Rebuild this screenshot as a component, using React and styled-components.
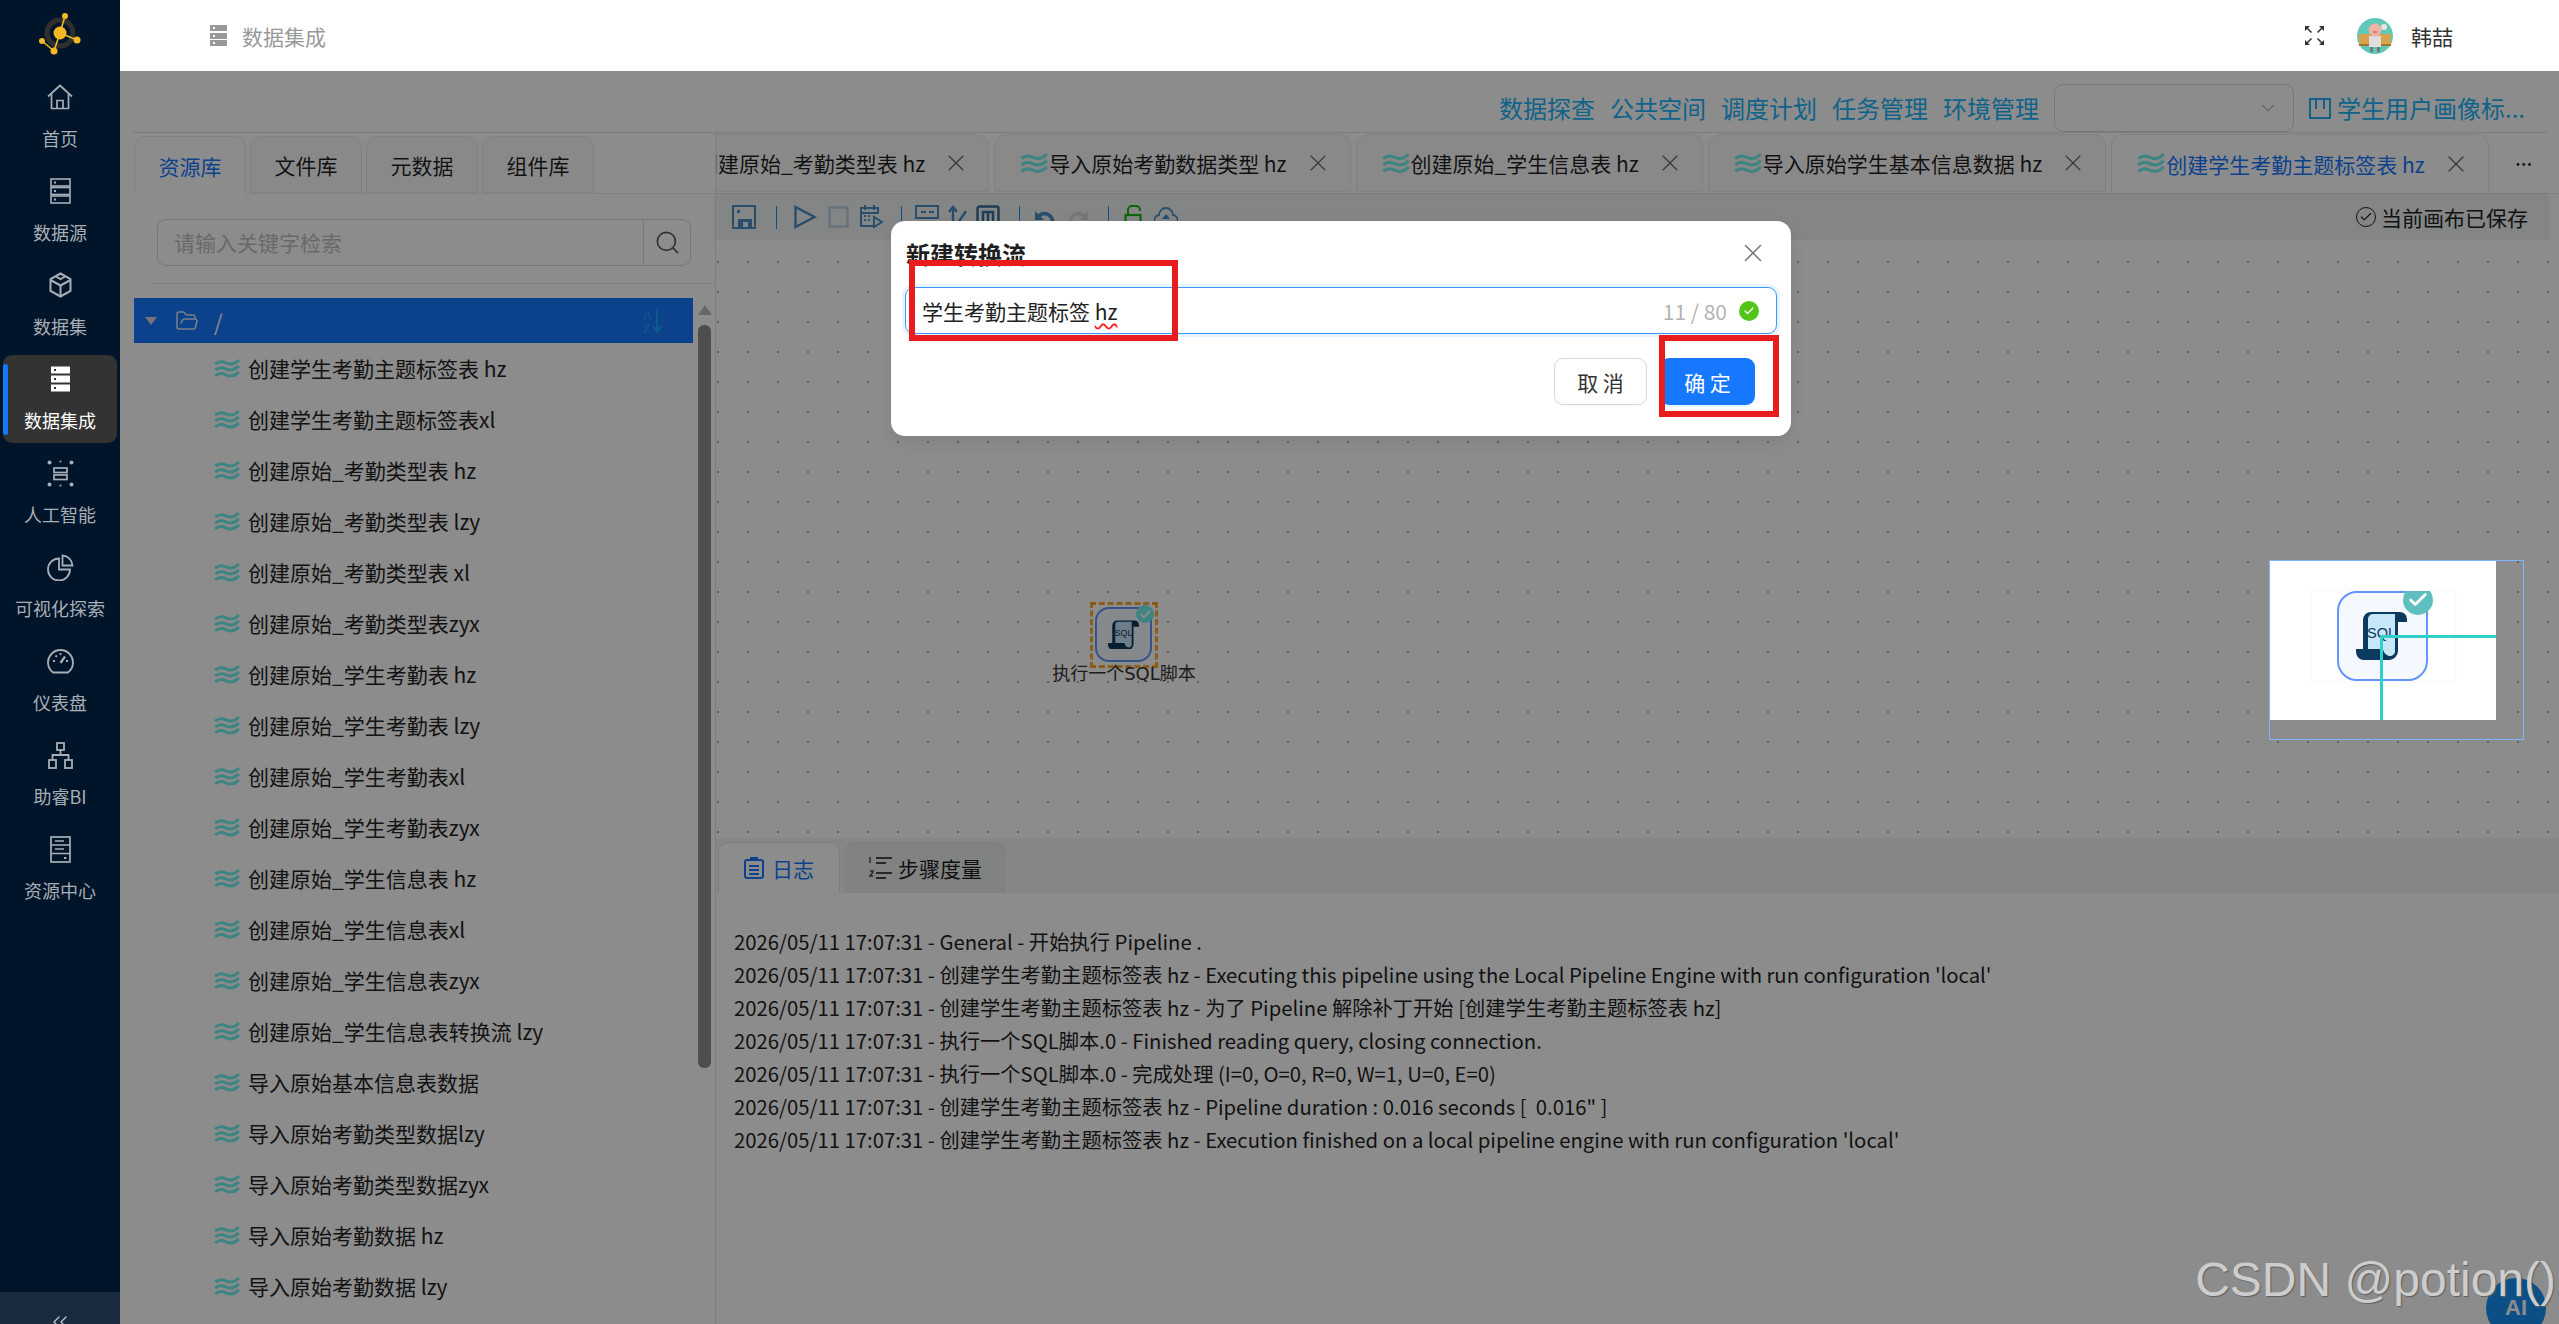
import React from 'react'
import styled, { createGlobalStyle } from 'styled-components'
import { Search, X, ChevronDown, ChevronsLeft, Check, FolderOpen } from 'lucide-react'

const treeItems = [
  '创建学生考勤主题标签表 hz',
  '创建学生考勤主题标签表xl',
  '创建原始_考勤类型表 hz',
  '创建原始_考勤类型表 lzy',
  '创建原始_考勤类型表 xl',
  '创建原始_考勤类型表zyx',
  '创建原始_学生考勤表 hz',
  '创建原始_学生考勤表 lzy',
  '创建原始_学生考勤表xl',
  '创建原始_学生考勤表zyx',
  '创建原始_学生信息表 hz',
  '创建原始_学生信息表xl',
  '创建原始_学生信息表zyx',
  '创建原始_学生信息表转换流 lzy',
  '导入原始基本信息表数据',
  '导入原始考勤类型数据lzy',
  '导入原始考勤类型数据zyx',
  '导入原始考勤数据 hz',
  '导入原始考勤数据 lzy',
]

const stamp = '2026/05/11 17:07:31 - '
const job = '创建学生考勤主题标签表 hz - '
const logLines = [
  stamp + 'General - 开始执行 Pipeline .',
  stamp + job + "Executing this pipeline using the Local Pipeline Engine with run configuration 'local'",
  stamp + job + '为了 Pipeline 解除补丁开始 [创建学生考勤主题标签表 hz]',
  stamp + '执行一个SQL脚本.0 - Finished reading query, closing connection.',
  stamp + '执行一个SQL脚本.0 - 完成处理 (I=0, O=0, R=0, W=1, U=0, E=0)',
  stamp + job + 'Pipeline duration : 0.016 seconds [  0.016" ]',
  stamp + job + "Execution finished on a local pipeline engine with run configuration 'local'",
]

const editorTabs = [
  { label: '创建原始_考勤类型表 hz' },
  { label: '导入原始考勤数据类型 hz' },
  { label: '创建原始_学生信息表 hz' },
  { label: '导入原始学生基本信息数据 hz' },
  { label: '创建学生考勤主题标签表 hz', active: true },
]

function LogoMark() {
  return (
    <svg width="48" height="50" viewBox="0 0 48 50">
      <circle cx="21" cy="22" r="13" fill="none" stroke="#2f2f2c" strokeWidth="5" />
      <g stroke="#f2b826" strokeWidth="1.6">
        <line x1="21" y1="22" x2="26" y2="5" />
        <line x1="21" y1="22" x2="38" y2="29" />
        <line x1="21" y1="22" x2="15" y2="40" />
        <line x1="15" y1="40" x2="3" y2="30" />
      </g>
      <g fill="#f2b826">
        <circle cx="21" cy="22" r="6.5" />
        <circle cx="26" cy="5" r="3" />
        <circle cx="38" cy="29" r="3.5" />
        <circle cx="15" cy="40" r="3.5" />
        <circle cx="3" cy="30" r="3" />
      </g>
    </svg>
  )
}

function HomeIcon() {
  return (
    <svg width="28" height="26" viewBox="0 0 28 26" fill="none" stroke="currentColor" strokeWidth="1.7">
      <path d="M2 12.5 14 1.5l12 11" />
      <path d="M5.5 10v14.5h17V10" />
      <path d="M11 24.5v-8h6v8" />
    </svg>
  )
}

function ServerIcon({ filled }) {
  const rows = filled ? [0.5, 9.5, 18.5] : [1, 9.5, 18]
  return (
    <svg width="21" height="26" viewBox="0 0 21 26" fill="none" stroke="currentColor" strokeWidth="1.6">
      {rows.map((y) => (
        <g key={y}>
          <rect x="1" y={y} width="19" height="7" fill={filled ? '#fff' : 'none'} stroke={filled ? 'none' : 'currentColor'} />
          <rect x="4" y={y + 2.5} width="2" height="2" fill={filled ? '#333' : 'currentColor'} stroke="none" />
        </g>
      ))}
    </svg>
  )
}

function CubeIcon() {
  return (
    <svg width="23" height="26" viewBox="0 0 23 26" fill="none" stroke="currentColor" strokeWidth="2">
      <path d="M11.5 1.5 21.5 7v12l-10 5.5L1.5 19V7z" />
      <path d="M1.5 8 11.5 13.5 21.5 8M11.5 13.5V24" />
      <path d="M7 4.5 11.5 7 16 4.5" />
    </svg>
  )
}

function AiIcon() {
  return (
    <svg width="27" height="27" viewBox="0 0 27 27" fill="none" stroke="currentColor" strokeWidth="1.7">
      <g fill="currentColor" stroke="none">
        <circle cx="2.5" cy="2.5" r="2" />
        <circle cx="24.5" cy="2.5" r="2" />
        <circle cx="2.5" cy="24.5" r="2" />
        <circle cx="24.5" cy="24.5" r="2" />
        <circle cx="13.5" cy="1.5" r="1" />
        <circle cx="13.5" cy="25.5" r="1" />
      </g>
      <rect x="7" y="8" width="13" height="4.5" />
      <rect x="7" y="15" width="13" height="4.5" />
    </svg>
  )
}

function PieIcon() {
  return (
    <svg width="27" height="27" viewBox="0 0 27 27" fill="none" stroke="currentColor" strokeWidth="1.8">
      <path d="M12 4.5a11 11 0 1 0 11 11H12z" />
      <path d="M15.5 1.5a10.5 10.5 0 0 1 10 10h-10z" />
    </svg>
  )
}

function GaugeIcon() {
  return (
    <svg width="27" height="26" viewBox="0 0 27 26" fill="none" stroke="currentColor" strokeWidth="1.8">
      <path d="M6 24.5a12.5 12.5 0 1 1 15 0z" />
      <path d="M13.5 15 18 8.5" strokeWidth="2.2" />
      <path d="M6 13h2M8.5 7.5l1.4 1.4M13.5 5v2M19 13h2" />
    </svg>
  )
}

function TreeIcon() {
  return (
    <svg width="25" height="27" viewBox="0 0 25 27" fill="none" stroke="currentColor" strokeWidth="1.8">
      <rect x="9" y="1" width="7" height="7" />
      <rect x="1" y="18" width="7" height="8" />
      <rect x="17" y="18" width="7" height="8" />
      <path d="M12.5 8v5M4.5 18v-5h16v5" />
    </svg>
  )
}

function CabinetIcon() {
  return (
    <svg width="21" height="27" viewBox="0 0 21 27" fill="none" stroke="currentColor" strokeWidth="1.7">
      <rect x="1" y="1" width="19" height="25" />
      <path d="M1 9h19M1 17.5h19M5 5h9M5 13h9" />
      <rect x="14" y="21" width="2.4" height="2" fill="currentColor" stroke="none" />
    </svg>
  )
}

function FlowIcon({ size = 26 }) {
  return (
    <svg width={size} height={size * 0.8} viewBox="0 0 26 21" fill="none" stroke="#6ff0ee" strokeWidth="3">
      <path d="M1 6c4-3 7-3 11-1s8 2 13-3" />
      <path d="M1 12c4-3 7-3 11-1s8 2 13-3" />
      <path d="M1 18c4-3 7-3 11-1s8 2 13-3" />
    </svg>
  )
}

function ScrollIcon({ width }) {
  return (
    <svg width={width} viewBox="0 0 51 49">
      <path d="M7 38V9a8 8 0 0 1 8-8h29a7 7 0 0 1 7 7v3h-9v29a9 9 0 0 1-9 9H8a8 8 0 0 1-8-8v-3z" fill="#0b3a5e" />
      <path d="M12 38V8a5 5 0 0 1 5-5h22v38a5 5 0 0 1-8 3 8 8 0 0 1-4-6z" fill="#c7e6fa" />
      <text x="25.5" y="27" textAnchor="middle" fontFamily="Liberation Sans, sans-serif" fontSize="14.5" fill="#0b3a5e">SQL</text>
    </svg>
  )
}

function ToolSave() {
  return (
    <svg width="24" height="24" viewBox="0 0 24 24" fill="#4a8ec4">
      <path fillRule="evenodd" d="M0 0h24v24H0zM2 2v20h4v-8h14v8h2V2zM5 5h3v3H5zM11 17h5v5h-5z" />
    </svg>
  )
}

function ToolPlay() {
  return (
    <svg width="23" height="24" viewBox="0 0 23 24" fill="none" stroke="#4a8ec4" strokeWidth="2.4">
      <path d="M1.5 2v20l19-10z" />
    </svg>
  )
}

function ToolStop() {
  return (
    <svg width="21" height="24" viewBox="0 0 21 24" fill="none" stroke="#b8cfe0" strokeWidth="2.4">
      <rect x="1.5" y="2.5" width="18" height="19" />
    </svg>
  )
}

function ToolSchedule() {
  return (
    <svg width="24" height="24" viewBox="0 0 24 24" fill="none" stroke="#4a8ec4" strokeWidth="2">
      <path d="M13 21H1V3h17v6M1 8h17M5 0v5M14 0v5" />
      <path d="M4 11h2M8 11h2M4 15h2M8 15h2" />
      <path d="M14 12v10l8-5z" />
    </svg>
  )
}

function ToolDataBar() {
  return (
    <svg width="24" height="24" viewBox="0 0 24 24" fill="none" stroke="#4a8ec4" strokeWidth="2">
      <rect x="1" y="1" width="22" height="12" />
      <path d="M6 7h5M14 7h5M1 18h22M1 23h22" />
    </svg>
  )
}

function ToolArrows() {
  return (
    <svg width="19" height="24" viewBox="0 0 19 24" fill="none" stroke="#4a8ec4" strokeWidth="2.4">
      <path d="M5 24V3M1 7l4-5 4 5M10 18 18 6" />
    </svg>
  )
}

function ToolFrame() {
  return (
    <svg width="24" height="24" viewBox="0 0 24 24" fill="none" stroke="#37709c" strokeWidth="2.4">
      <rect x="1.5" y="1.5" width="21" height="21" rx="2" />
      <path d="M7 17V7h10v10M12 7v10" />
    </svg>
  )
}

function ToolUndo({ flip, color }) {
  return (
    <svg width="22" height="24" viewBox="0 0 22 24" fill="none" stroke={color} strokeWidth="3.5" style={flip ? { transform: 'scaleX(-1)' } : undefined}>
      <path d="M19 18C18 8 9 6 4 12" />
      <path d="M1 6v9h9" fill={color} stroke="none" />
    </svg>
  )
}

function ToolLock() {
  return (
    <svg width="18" height="24" viewBox="0 0 18 24" fill="none" stroke="#17b817" strokeWidth="2.2">
      <path d="M4 10V5a4 4 0 0 1 4-4h4a4 4 0 0 1 4 4v1" />
      <rect x="1.5" y="10" width="15" height="12" />
    </svg>
  )
}

function ToolCloud() {
  return (
    <svg width="24" height="24" viewBox="0 0 24 24" fill="none" stroke="#4a8ec4" strokeWidth="1.8">
      <path d="M6 20a5 5 0 0 1-1-10 7 7 0 0 1 14 0 5 5 0 0 1-1 10z" />
      <path d="M12 9l4 5H8z" fill="#4a8ec4" stroke="none" />
    </svg>
  )
}

function ExpandIcon() {
  return (
    <svg width="21" height="21" viewBox="0 0 21 21" fill="#333" stroke="#333" strokeWidth="1.5">
      <path d="M7.5 7.5 2.5 2.5M13.5 7.5l5-5M7.5 13.5l-5 5M13.5 13.5l5 5" />
      <path d="M1 1h5L1 6zM20 1h-5l5 5zM1 20h5l-5-5zM20 20h-5l5-5z" stroke="none" />
    </svg>
  )
}

function AvatarIcon() {
  return (
    <svg width="36" height="36" viewBox="0 0 36 36">
      <circle cx="18" cy="18" r="18" fill="#5fc8b8" />
      <rect x="2" y="16" width="32" height="12" fill="#d9a24c" />
      <rect x="2" y="26" width="32" height="2" fill="#a5742c" />
      <circle cx="27" cy="9" r="3" fill="#e8e8e0" />
      <rect x="12" y="18" width="12" height="11" fill="#dedede" />
      <path d="M13 29h3v5h-3zM20 29h3v5h-3z" fill="#777" />
      <circle cx="18" cy="12" r="6.5" fill="#efb4a6" />
      <ellipse cx="18" cy="14" rx="2.5" ry="1.5" fill="#d98a80" />
    </svg>
  )
}

function LogIcon() {
  return (
    <svg width="20" height="22" viewBox="0 0 20 22" fill="none" stroke="#1677ff" strokeWidth="2">
      <rect x="1" y="3" width="18" height="18" rx="2" />
      <rect x="6" y="0" width="8" height="4" fill="#1677ff" stroke="none" />
      <path d="M5 9h10M5 13h10M5 17h10" />
    </svg>
  )
}

function MetricIcon() {
  return (
    <svg width="25" height="24" viewBox="0 0 25 24" fill="none" stroke="#4a4a4a" strokeWidth="2.2">
      <path d="M2 1v6M2 15h3v1l-3 4h3" strokeWidth="1.5" />
      <path d="M8 2h16M8 7h10M8 17h16M8 22h10" />
    </svg>
  )
}

function SortIcon() {
  return (
    <svg width="20" height="24" viewBox="0 0 20 24" fill="none" stroke="#18a4ff" strokeWidth="2">
      <text x="0" y="11" fontFamily="Liberation Sans, sans-serif" fontSize="13" fill="#18a4ff" stroke="none">A</text>
      <text x="0" y="24" fontFamily="Liberation Sans, sans-serif" fontSize="13" fill="#18a4ff" stroke="none">Z</text>
      <path d="M14 0v22M10 17l4 6 5-6" />
    </svg>
  )
}

function App() {
  return (
    <Page>
      <GlobalStyle />
      <Sidebar>
        <LogoBox>
          <LogoMark />
        </LogoBox>
        <NavList>
          <NavItem>
            <NavIcon><HomeIcon /></NavIcon>
            <NavLabel>首页</NavLabel>
          </NavItem>
          <NavItem>
            <NavIcon><ServerIcon /></NavIcon>
            <NavLabel>数据源</NavLabel>
          </NavItem>
          <NavItem>
            <NavIcon><CubeIcon /></NavIcon>
            <NavLabel>数据集</NavLabel>
          </NavItem>
          <NavItem $active>
            <NavIcon><ServerIcon filled /></NavIcon>
            <NavLabel>数据集成</NavLabel>
          </NavItem>
          <NavItem>
            <NavIcon><AiIcon /></NavIcon>
            <NavLabel>人工智能</NavLabel>
          </NavItem>
          <NavItem>
            <NavIcon><PieIcon /></NavIcon>
            <NavLabel>可视化探索</NavLabel>
          </NavItem>
          <NavItem>
            <NavIcon><GaugeIcon /></NavIcon>
            <NavLabel>仪表盘</NavLabel>
          </NavItem>
          <NavItem>
            <NavIcon><TreeIcon /></NavIcon>
            <NavLabel>助睿BI</NavLabel>
          </NavItem>
          <NavItem>
            <NavIcon><CabinetIcon /></NavIcon>
            <NavLabel>资源中心</NavLabel>
          </NavItem>
        </NavList>
        <CollapseBar>
          <ChevronsLeft size={24} strokeWidth={1.2} />
        </CollapseBar>
      </Sidebar>

      <Content>
        <Header>
          <HeaderTitle>
            <HeaderGlyph>
              <HeaderRow /><HeaderRow /><HeaderRow />
            </HeaderGlyph>
            数据集成
          </HeaderTitle>
          <HeaderUser>
            <ExpandIcon />
            <AvatarBox><AvatarIcon /></AvatarBox>
            <UserName>韩喆</UserName>
          </HeaderUser>
        </Header>

        <Main>
          <ActionBar>
            <ActionLink>数据探查</ActionLink>
            <ActionLink>公共空间</ActionLink>
            <ActionLink>调度计划</ActionLink>
            <ActionLink>任务管理</ActionLink>
            <ActionLink>环境管理</ActionLink>
            <SelectBox>
              <ChevronDown size={22} strokeWidth={1.4} color="#bfbfbf" />
            </SelectBox>
            <ProjectName>
              <svg width="22" height="21" viewBox="0 0 22 21" fill="none" stroke="#1bb4fa" strokeWidth="2">
                <rect x="1" y="1" width="20" height="19" />
                <path d="M7 1v10M15 1v10" />
              </svg>
              学生用户画像标...
            </ProjectName>
          </ActionBar>

          <Workspace>
            <LeftPanel>
              <SideTabs>
                <SideTab $active>资源库</SideTab>
                <SideTab>文件库</SideTab>
                <SideTab>元数据</SideTab>
                <SideTab>组件库</SideTab>
              </SideTabs>
              <SearchBox>
                <SearchInput>请输入关键字检索</SearchInput>
                <SearchButton><Search size={27} strokeWidth={1.5} color="#555" /></SearchButton>
              </SearchBox>
              <PanelDivider />
              <TreeArea>
                <Tree>
                  <RootRow>
                    <Caret />
                    <FolderOpen size={24} strokeWidth={1.5} color="#fff" style={{ opacity: 0.85 }} />
                    <RootName>/</RootName>
                    <SortBox><SortIcon /></SortBox>
                  </RootRow>
                  {treeItems.map((item) => (
                    <TreeRow key={item}>
                      <FlowIcon />
                      <TreeRowText>{item}</TreeRowText>
                    </TreeRow>
                  ))}
                </Tree>
                <ScrollTrack>
                  <ScrollArrow />
                  <ScrollThumb />
                </ScrollTrack>
              </TreeArea>
            </LeftPanel>

            <RightPanel>
              <EditorTabs>
                {editorTabs.map((tab, i) => (
                  <EditorTab key={tab.label} $active={tab.active} $first={i === 0}>
                    <FlowIcon size={28} />
                    <EditorTabText>{tab.label}</EditorTabText>
                    <X size={28} strokeWidth={1} color="#666" />
                  </EditorTab>
                ))}
                <MoreTabs>...</MoreTabs>
              </EditorTabs>

              <Toolbar>
                <ToolGroup $gap={11} $left={16} $right={20}><ToolSave /></ToolGroup>
                <ToolDivider />
                <ToolGroup $gap={11} $left={17} $right={17}>
                  <ToolPlay /><ToolStop /><ToolSchedule />
                </ToolGroup>
                <ToolDivider />
                <ToolGroup $gap={9} $left={13} $right={19}>
                  <ToolDataBar /><ToolArrows /><ToolFrame />
                </ToolGroup>
                <ToolDivider />
                <ToolGroup $gap={11} $left={14} $right={19}>
                  <ToolUndo color="#4a8ec4" /><ToolUndo flip color="#d9d9d9" />
                </ToolGroup>
                <ToolDivider />
                <ToolGroup $gap={12} $left={15} $right={0}>
                  <ToolLock /><ToolCloud />
                </ToolGroup>
                <SavedNote>
                  <SavedCircle><Check size={14} strokeWidth={2} /></SavedCircle>
                  当前画布已保存
                </SavedNote>
              </Toolbar>

              <Canvas>
                <StepNode>
                  <StepFrame>
                    <StepCard>
                      <ScrollIcon width={31} />
                      <StepBadge><Check size={13} strokeWidth={3.5} color="#fff" /></StepBadge>
                    </StepCard>
                  </StepFrame>
                  <StepLabel>执行一个SQL脚本</StepLabel>
                </StepNode>
              </Canvas>

              <LogPanel>
                <LogTabs>
                  <LogTab $active><LogIcon />日志</LogTab>
                  <LogTab><MetricIcon />步骤度量</LogTab>
                </LogTabs>
                <LogBody>
                  {logLines.map((line, i) => (
                    <LogLine key={i}>{line}</LogLine>
                  ))}
                </LogBody>
              </LogPanel>
            </RightPanel>
          </Workspace>
        </Main>
      </Content>

      <AiButton>AI</AiButton>
      <Mask />

      <Minimap>
        <MinimapPage>
          <MinimapCard>
            <MinimapStep>
              <ScrollIcon width={51} />
            </MinimapStep>
            <MinimapBadge><Check size={22} strokeWidth={3} color="#fff" /></MinimapBadge>
          </MinimapCard>
          <MinimapLineH />
          <MinimapLineV />
        </MinimapPage>
      </Minimap>

      <Modal>
        <ModalHead>
          <ModalTitle>新建转换流</ModalTitle>
          <X size={30} strokeWidth={1.2} color="#777" />
        </ModalHead>
        <NameField>
          <NameText>学生考勤主题标签 <Misspelt>hz</Misspelt></NameText>
          <NameCount>11 / 80</NameCount>
          <NameOk><Check size={12} strokeWidth={2.5} color="#fff" /></NameOk>
        </NameField>
        <ModalFoot>
          <GhostButton>取 消</GhostButton>
          <PrimaryButton>确 定</PrimaryButton>
        </ModalFoot>
      </Modal>

      <CalloutBox $left={909} $top={260} $width={269} $height={81} />
      <CalloutBox $left={1659} $top={335} $width={120} $height={82} />
      <Watermark>CSDN @potion()</Watermark>
    </Page>
  )
}

export default App

const GlobalStyle = createGlobalStyle`
html, body {
  margin: 0;
  padding: 0;
  background: #fff;
  overflow: hidden;
}
* {
  box-sizing: border-box;
}
`

const Page = styled.div`
position: relative;
display: flex;
width: 2559px;
height: 1324px;
overflow: hidden;
font-family: "Noto Sans CJK SC", "Noto Sans", sans-serif;
font-size: 21px;
color: rgba(0, 0, 0, 0.88);
`

const Sidebar = styled.aside`
width: 120px;
flex-shrink: 0;
display: flex;
flex-direction: column;
background: #00152a;
`

const LogoBox = styled.div`
height: 73px;
padding: 11px 0 0 39px;
`

const NavList = styled.nav`
display: flex;
flex-direction: column;
gap: 6px;
padding: 0 3px;
`

const NavItem = styled.div`
position: relative;
height: 88px;
padding-top: 10px;
display: flex;
flex-direction: column;
align-items: center;
border-radius: 9px;
color: ${(p) => (p.$active ? '#fff' : '#a8aeb5')};
background: ${(p) => (p.$active ? '#333' : 'transparent')};

&::before {
  content: ${(p) => (p.$active ? '""' : 'none')};
  position: absolute;
  left: 0;
  top: 9px;
  width: 5px;
  height: 71px;
  border-radius: 3px;
  background: #1677ff;
}
`

const NavIcon = styled.div`
height: 28px;
display: flex;
align-items: center;
justify-content: center;
`

const NavLabel = styled.div`
margin-top: 15px;
font-size: 18px;
line-height: 24px;
white-space: nowrap;
`

const CollapseBar = styled.div`
margin-top: auto;
height: 32px;
padding-top: 18px;
overflow: hidden;
display: flex;
justify-content: center;
align-items: flex-start;
background: #1a2b3f;
color: #c8ccd2;
`

const Content = styled.div`
flex: 1;
min-width: 0;
display: flex;
flex-direction: column;
`

const Header = styled.header`
height: 71px;
flex-shrink: 0;
display: flex;
align-items: center;
justify-content: space-between;
padding: 0 106px 0 90px;
background: #fff;
`

const HeaderTitle = styled.div`
display: flex;
align-items: center;
gap: 15px;
color: #999;
font-size: 21px;
`

const HeaderGlyph = styled.div`
width: 17px;
display: flex;
flex-direction: column;
gap: 1.5px;
`

const HeaderRow = styled.div`
position: relative;
height: 6px;
background: #999;

&::before {
  content: "";
  position: absolute;
  left: 3px;
  top: 2px;
  width: 2px;
  height: 2px;
  background: #fff;
}
`

const HeaderUser = styled.div`
display: flex;
align-items: center;
`

const AvatarBox = styled.div`
width: 36px;
height: 36px;
margin: 0 18px 0 32px;
`

const UserName = styled.div`
font-size: 21px;
color: #333;
`

const Main = styled.main`
flex: 1;
min-height: 0;
display: flex;
flex-direction: column;
background: #fff;
`

const ActionBar = styled.div`
height: 62px;
flex-shrink: 0;
margin: 0 11px 0 12px;
padding: 13px 23px 0 0;
display: flex;
align-items: center;
justify-content: flex-end;
gap: 15px;
border-bottom: 1px solid #e4e4e4;
`

const ActionLink = styled.div`
font-size: 24px;
line-height: 34px;
color: #1bb4fa;
`

const SelectBox = styled.div`
width: 240px;
height: 48px;
padding-right: 14px;
display: flex;
align-items: center;
justify-content: flex-end;
border: 1px solid #d9d9d9;
border-radius: 9px;
`

const ProjectName = styled.div`
display: flex;
align-items: center;
gap: 6px;
font-size: 24px;
line-height: 34px;
color: #1bb4fa;
`

const Workspace = styled.div`
flex: 1;
min-height: 0;
display: flex;
`

const LeftPanel = styled.section`
width: 596px;
flex-shrink: 0;
display: flex;
flex-direction: column;
padding-left: 14px;
border-right: 1px solid #e8e8e8;
`

const SideTabs = styled.div`
height: 61px;
flex-shrink: 0;
padding-top: 3px;
display: flex;
gap: 4px;
border-bottom: 1px solid #ececec;
`

const SideTab = styled.div`
width: 112px;
height: ${(p) => (p.$active ? '58px' : '57px')};
display: flex;
align-items: center;
justify-content: center;
font-size: 21px;
color: ${(p) => (p.$active ? '#1677ff' : 'rgba(0, 0, 0, 0.88)')};
border: 1px solid #ececec;
border-bottom: ${(p) => (p.$active ? 'none' : '1px solid #ececec')};
border-radius: 12px 12px 0 0;
background: ${(p) => (p.$active ? '#fff' : '#fafafa')};
`

const SearchBox = styled.div`
width: 534px;
height: 47px;
flex-shrink: 0;
margin: 25px 0 0 23px;
display: flex;
`

const SearchInput = styled.div`
flex: 1;
padding: 0 0 2px 16px;
display: flex;
align-items: center;
font-size: 21px;
color: #bfbfbf;
border: 1px solid #d9d9d9;
border-radius: 9px 0 0 9px;
`

const SearchButton = styled.div`
width: 47px;
display: flex;
align-items: center;
justify-content: center;
border: 1px solid #d9d9d9;
border-left: none;
border-radius: 0 9px 9px 0;
`

const PanelDivider = styled.div`
height: 1px;
flex-shrink: 0;
margin: 17px 0 14px 15px;
background: #ececec;
`

const TreeArea = styled.div`
flex: 1;
min-height: 0;
display: flex;
overflow: hidden;
`

const Tree = styled.div`
width: 559px;
flex-shrink: 0;
`

const RootRow = styled.div`
height: 45px;
padding: 0 30px 0 11px;
display: flex;
align-items: center;
color: #fff;
background: #1677ff;
`

const Caret = styled.div`
width: 0;
height: 0;
margin-right: 18px;
border-left: 6px solid transparent;
border-right: 6px solid transparent;
border-top: 8px solid #d8d8d8;
`

const RootName = styled.span`
margin-left: 15px;
font-size: 22px;
`

const SortBox = styled.div`
margin-left: auto;
display: flex;
`

const TreeRow = styled.div`
height: 51px;
padding-left: 80px;
display: flex;
align-items: center;
gap: 8px;
font-size: 21px;
white-space: nowrap;
color: #242424;
`

const TreeRowText = styled.span`
line-height: 28px;
padding-bottom: 2px;
`

const ScrollTrack = styled.div`
width: 13px;
margin-left: 5px;
display: flex;
flex-direction: column;
align-items: center;
`

const ScrollArrow = styled.div`
width: 0;
height: 0;
margin-top: 7px;
border-left: 7px solid transparent;
border-right: 7px solid transparent;
border-bottom: 10px solid #bdbdbd;
`

const ScrollThumb = styled.div`
width: 13px;
height: 743px;
margin-top: 10px;
border-radius: 6px;
background: #8f8f8f;
`

const RightPanel = styled.section`
flex: 1;
min-width: 0;
display: flex;
flex-direction: column;
`

const EditorTabs = styled.div`
height: 61px;
flex-shrink: 0;
padding-top: 1px;
display: flex;
gap: 5px;
overflow: hidden;
border-bottom: 1px solid #e8e8e8;
`

const EditorTab = styled.div`
height: 58px;
flex-shrink: 0;
margin-left: ${(p) => (p.$first ? '-74px' : '0')};
padding: 0 18px 0 25px;
display: flex;
align-items: center;
font-size: 21px;
white-space: nowrap;
color: ${(p) => (p.$active ? '#1677ff' : 'rgba(0, 0, 0, 0.88)')};
border: 1px solid #ececec;
border-bottom: ${(p) => (p.$active ? 'none' : '1px solid #ececec')};
border-radius: 12px 12px 0 0;
background: ${(p) => (p.$active ? '#fff' : '#fafafa')};
`

const EditorTabText = styled.span`
margin: 0 17px 0 1px;
`

const MoreTabs = styled.div`
width: 60px;
display: flex;
align-items: flex-start;
justify-content: center;
padding-top: 8px;
font-size: 21px;
`

const Toolbar = styled.div`
height: 46px;
flex-shrink: 0;
margin-right: 11px;
display: flex;
align-items: center;
background: #f0f2f2;
box-shadow: 0 2px 4px rgba(0, 0, 0, 0.12);
`

const ToolGroup = styled.div`
display: flex;
align-items: center;
gap: ${(p) => p.$gap}px;
padding: 0 ${(p) => p.$right}px 0 ${(p) => p.$left}px;
`

const ToolDivider = styled.div`
width: 1px;
height: 23px;
background: #1890ff;
`

const SavedNote = styled.div`
margin-left: auto;
padding-right: 20px;
display: flex;
align-items: center;
gap: 5px;
font-size: 21px;
color: #222;
`

const SavedCircle = styled.div`
width: 20px;
height: 20px;
display: flex;
align-items: center;
justify-content: center;
border: 1.5px solid #222;
border-radius: 50%;
`

const Canvas = styled.div`
position: relative;
flex: 1;
min-height: 0;
background-color: #fff;
background-image: radial-gradient(circle, #b0b0b0 1.1px, transparent 1.3px);
background-size: 30px 30px;
background-position: -13px 7px;
`

const StepNode = styled.div`
position: absolute;
left: 336px;
top: 362px;
width: 144px;
display: flex;
flex-direction: column;
align-items: center;
`

const StepFrame = styled.div`
width: 68px;
height: 66px;
padding: 2px;
border: 3px dashed #ffa92e;
`

const StepCard = styled.div`
position: relative;
width: 57px;
height: 55px;
display: flex;
align-items: center;
justify-content: center;
background: #f5f9ff;
border: 2px solid #6494fa;
border-radius: 14px;
`

const StepBadge = styled.div`
position: absolute;
right: -4px;
top: -4px;
width: 18px;
height: 18px;
display: flex;
align-items: center;
justify-content: center;
border-radius: 50%;
background: #6ff0ee;
`

const StepLabel = styled.div`
font-size: 18px;
line-height: 20px;
margin-top: -4px;
white-space: nowrap;
font-family: "DejaVu Sans", "Noto Sans CJK SC", sans-serif;
color: #333;
`

const Minimap = styled.div`
position: absolute;
left: 2269px;
top: 560px;
width: 255px;
height: 180px;
border: 1.5px solid #7fb5ff;
`

const MinimapPage = styled.div`
position: relative;
width: 226px;
height: 159px;
background: #fff;
`

const MinimapCard = styled.div`
position: absolute;
left: 42px;
top: 30px;
width: 142px;
height: 90px;
background: #fff;
box-shadow: 0 0 3px rgba(0, 0, 0, 0.08);
overflow: hidden;
`

const MinimapStep = styled.div`
position: absolute;
left: 25px;
top: 0;
width: 91px;
height: 90px;
padding: 18px 0 0 17px;
background: #f5f9ff;
border: 2px solid #6494fa;
border-radius: 20px;
`

const MinimapBadge = styled.div`
position: absolute;
left: 91px;
top: -6px;
width: 30px;
height: 30px;
display: flex;
align-items: center;
justify-content: center;
border-radius: 50%;
background: #5fbfc0;
`

const MinimapLineH = styled.div`
position: absolute;
left: 110px;
top: 74px;
width: 116px;
height: 3px;
background: #2ed0c8;
`

const MinimapLineV = styled.div`
position: absolute;
left: 110px;
top: 74px;
width: 3px;
height: 85px;
background: #2ed0c8;
`

const LogPanel = styled.div`
height: 486px;
flex-shrink: 0;
display: flex;
flex-direction: column;
`

const LogTabs = styled.div`
height: 55px;
flex-shrink: 0;
padding: 4px 0 0 2px;
display: flex;
gap: 5px;
background: #f2f5f5;
`

const LogTab = styled.div`
height: 51px;
padding: 0 ${(p) => (p.$active ? '25px' : '22px')};
display: flex;
align-items: center;
gap: ${(p) => (p.$active ? '8px' : '5px')};
font-size: 21px;
color: ${(p) => (p.$active ? '#1677ff' : 'rgba(0, 0, 0, 0.88)')};
background: ${(p) => (p.$active ? '#fff' : '#eceeee')};
border: 1px solid #e4e6e6;
border-bottom: none;
border-radius: 10px 10px 0 0;
`

const LogBody = styled.div`
flex: 1;
padding: 32px 0 0 18px;
background: #fff;
`

const LogLine = styled.div`
height: 33px;
line-height: 33px;
font-size: 20.3px;
white-space: pre;
color: #1f1f1f;
`

const AiButton = styled.div`
position: absolute;
left: 2486px;
top: 1278px;
width: 60px;
height: 60px;
display: flex;
align-items: center;
justify-content: center;
border-radius: 50%;
font-family: "Liberation Sans", sans-serif;
font-size: 22px;
font-weight: 700;
color: #fff;
background: #1490f5;
`

const Mask = styled.div`
position: absolute;
left: 120px;
top: 71px;
right: 0;
bottom: 0;
background: rgba(0, 0, 0, 0.45);
`

const Modal = styled.div`
position: absolute;
left: 891px;
top: 221px;
width: 900px;
height: 215px;
padding: 15px 14px 0 14px;
display: flex;
flex-direction: column;
background: #fff;
border-radius: 14px;
box-shadow: 0 6px 16px rgba(0, 0, 0, 0.08);
`

const ModalHead = styled.div`
height: 34px;
padding: 0 9px 0 1px;
display: flex;
align-items: center;
justify-content: space-between;
`

const ModalTitle = styled.div`
font-size: 24px;
font-weight: 700;
color: #1f1f1f;
`

const NameField = styled.div`
width: 872px;
height: 47px;
margin-top: 17px;
padding: 0 17px 0 16px;
display: flex;
align-items: center;
border: 1px solid #4096ff;
border-radius: 9px;
box-shadow: 0 0 0 3px rgba(5, 145, 255, 0.1);
`

const NameText = styled.div`
font-size: 21px;
color: #222;
`

const Misspelt = styled.span`
text-decoration: underline wavy #ff2020 1.5px;
text-underline-offset: 3px;
`

const NameCount = styled.div`
margin-left: auto;
font-size: 21px;
color: #b3b3b3;
`

const NameOk = styled.div`
width: 20px;
height: 20px;
margin-left: 12px;
display: flex;
align-items: center;
justify-content: center;
border-radius: 50%;
background: #52c41a;
`

const ModalFoot = styled.div`
margin-top: 24px;
padding-right: 22px;
display: flex;
justify-content: flex-end;
gap: 13px;
`

const GhostButton = styled.div`
width: 93px;
height: 47px;
display: flex;
align-items: center;
justify-content: center;
font-size: 21px;
color: #333;
background: #fff;
border: 1px solid #d9d9d9;
border-radius: 9px;
box-shadow: 0 2px 0 rgba(0, 0, 0, 0.02);
`

const PrimaryButton = styled.div`
width: 95px;
height: 47px;
display: flex;
align-items: center;
justify-content: center;
font-size: 21px;
color: #fff;
background: #1677ff;
border-radius: 9px;
box-shadow: 0 2px 0 rgba(5, 145, 255, 0.1);
`

const CalloutBox = styled.div`
position: absolute;
left: ${(p) => p.$left}px;
top: ${(p) => p.$top}px;
width: ${(p) => p.$width}px;
height: ${(p) => p.$height}px;
border: 6px solid #e81c1c;
`

const Watermark = styled.div`
position: absolute;
right: 3px;
bottom: 14px;
font-family: "Liberation Sans", sans-serif;
font-size: 48px;
line-height: 60px;
white-space: nowrap;
color: #cdcdcd;
text-shadow: 1px 1px 1px #5f5f5f;
`
